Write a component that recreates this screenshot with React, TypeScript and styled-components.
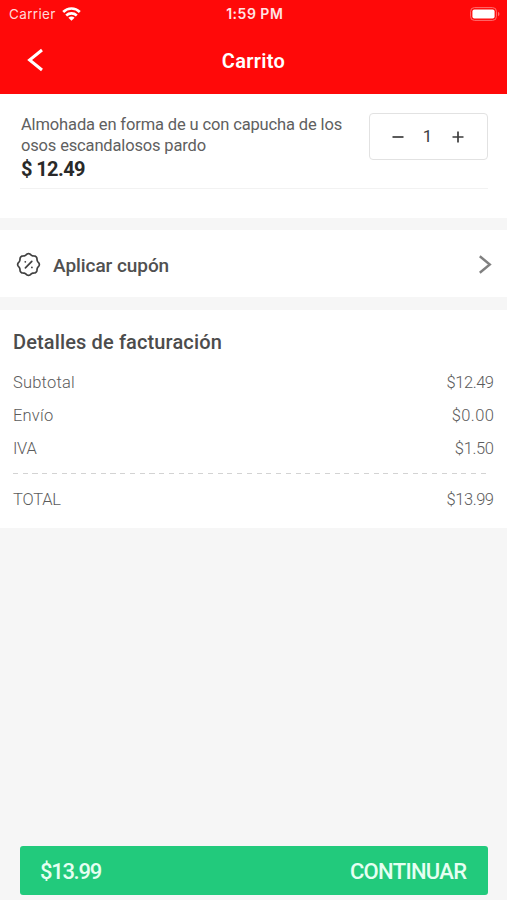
import React from "react";
import styled, { createGlobalStyle } from "styled-components";

const GlobalStyle = createGlobalStyle`
  * { box-sizing: border-box; }
  body { margin: 0; background: #f6f6f6; font-family: Roboto, sans-serif; }
  button { font: inherit; border: 0; padding: 0; margin: 0; background: none; color: inherit; display: flex; }
`;

const Screen = styled.div`
  width: 507px;
  height: 900px;
  display: flex;
  flex-direction: column;
  background: #f6f6f6;
  overflow: hidden;
`;

const Header = styled.header`
  height: 94px;
  flex: none;
  background: #ff0909;
  color: #fff;
`;

const StatusBar = styled.div`
  height: 27px;
  display: grid;
  grid-template-columns: 1fr auto 1fr;
  align-items: center;
  padding: 0 7px 0 9px;
  font-family: Inter, sans-serif;
  font-size: 13.5px;
`;

const Carrier = styled.div`
  display: flex;
  align-items: center;
  gap: 6px;
  color: #ffd9d9;
  letter-spacing: 0.35px;
`;

const Clock = styled.div`
  font-size: 14px;
  font-weight: 600;
  color: #ffe4e4;
  letter-spacing: 0.5px;
  margin-right: -0.5px;
`;

const BatterySlot = styled.div`
  display: flex;
  justify-content: flex-end;
`;

const TitleBar = styled.div`
  height: 67px;
  display: grid;
  grid-template-columns: 50px 1fr 50px;
  align-items: center;
`;

const BackButton = styled.button`
  && {
    padding-left: 26px;
    margin-top: -2px;
  }
`;

const Title = styled.h1`
  margin: 0;
  padding-top: 2px;
  text-align: center;
  font-size: 20px;
  font-weight: 600;
  line-height: 65px;
  letter-spacing: 0.3px;
`;

const CartSection = styled.section`
  height: 124px;
  flex: none;
  padding: 19px 19px 0 20px;
  background: #fff;
`;

const CartItem = styled.div`
  height: 76px;
  display: flex;
  justify-content: space-between;
  border-bottom: 1px solid #f2f2f2;
`;

const ItemText = styled.div`
  padding-left: 1px;
`;

const ItemLine = styled.div<{ $spacing: number }>`
  font-size: 16.5px;
  line-height: 21px;
  padding-top: 1px;
  margin-bottom: -1px;
  color: #606060;
  white-space: nowrap;
  letter-spacing: ${(p) => p.$spacing}px;
`;

const Price = styled.div`
  padding-top: 2px;
  font-size: 20px;
  line-height: 24px;
  font-weight: 700;
  letter-spacing: -0.6px;
  color: #292929;
`;

const Stepper = styled.div`
  width: 119px;
  height: 47px;
  display: flex;
  align-items: center;
  justify-content: center;
  gap: 18px;
  padding-right: 2px;
  border: 1.5px solid #e2e2e2;
  border-radius: 4px;
  color: #3d3d3d;
`;

const Quantity = styled.span`
  width: 12px;
  text-align: center;
  font-size: 17px;
  line-height: 20px;
  padding-bottom: 1px;
`;

const CouponRow = styled.section`
  height: 67px;
  margin: 12px 0 13px;
  flex: none;
  display: flex;
  align-items: center;
  padding: 1px 15px 0 16px;
  background: #fff;
`;

const CouponLabel = styled.span`
  flex: 1;
  margin-left: 12px;
  padding-top: 2px;
  font-size: 19px;
  font-weight: 500;
  letter-spacing: -0.06px;
  color: #505050;
`;

const Billing = styled.section`
  height: 218px;
  flex: none;
  padding: 18px 13px 0;
  background: #fff;
`;

const BillingTitle = styled.h2`
  margin: 0 0 10px;
  font-size: 20px;
  line-height: 28px;
  font-weight: 500;
  letter-spacing: 0.13px;
  color: #4c4c4c;
`;

const BillingRow = styled.div`
  height: 33px;
  display: flex;
  justify-content: space-between;
  align-items: center;
  font-size: 16.5px;
  font-weight: 300;
  color: #5c5c5c;
`;

const Label = styled.span<{ $spacing: number }>`
  letter-spacing: ${(p) => p.$spacing}px;
`;

const Amount = styled.span<{ $spacing: number }>`
  letter-spacing: ${(p) => p.$spacing}px;
  margin-right: ${(p) => -p.$spacing}px;
`;

const Dashes = styled.div`
  height: 1px;
  margin: 8px 6px 9px 0;
  background: repeating-linear-gradient(90deg, #d3d3d3 0 5px, transparent 5px 9.75px);
`;

const Checkout = styled.button`
  && {
    height: 49px;
    margin: auto 19px 5px 20px;
    padding: 2px 21px 0 20px;
    flex: none;
    align-items: center;
    justify-content: space-between;
    border-radius: 3px;
    background: #22ca7c;
    color: #e6fff2;
    font-size: 22px;
    font-weight: 500;
  }
`;

const rows = [
  { label: "Subtotal", amount: "$12.49", labelSpacing: 0.2, amountSpacing: -0.45 },
  { label: "Envío", amount: "$0.00", labelSpacing: 0.2, amountSpacing: 0.45 },
  { label: "IVA", amount: "$1.50", labelSpacing: -0.3, amountSpacing: -0.35 },
];

const WifiIcon = () => (
  <svg width="19" height="14" viewBox="0 0 19 14" fill="none" stroke="#fff" strokeWidth="2.6">
    <path d="M1.2 5C5.8.4 13.2.4 17.8 5" />
    <path d="M4.2 8.5c3-2.8 7.6-2.8 10.6 0" />
    <path d="M9.5 13.8 6.4 10.7c1.7-1.5 4.5-1.5 6.2 0Z" fill="#fff" stroke="none" />
  </svg>
);

const BatteryIcon = () => (
  <svg width="30" height="14" viewBox="0 0 30 14">
    <rect x=".6" y=".6" width="25.8" height="12.8" rx="3.8" fill="none" stroke="#ff7070" />
    <rect x="2.4" y="2.4" width="22.2" height="9.2" rx="2" fill="#fff" />
    <path d="M28 4.8c2 .9 2 3.5 0 4.4Z" fill="#ff7070" />
  </svg>
);

// Eight-lobed outline sampled around the badge centre.
const badgeOutline = Array.from({ length: 96 }, (_, i) => {
  const angle = (i / 96) * Math.PI * 2;
  const radius = 10.2 + 0.65 * Math.cos(angle * 8);
  return `${(12.5 + radius * Math.cos(angle)).toFixed(2)},${(12.5 + radius * Math.sin(angle)).toFixed(2)}`;
}).join(" ");

const CouponIcon = () => (
  <svg width="25" height="25" viewBox="0 0 25 25" fill="none" stroke="#404040" strokeWidth="1.7" strokeLinecap="round" strokeLinejoin="round">
    <polygon points={badgeOutline} />
    <path d="m9.4 15.8 6.4-6.4" />
    <path d="M9.3 9.8h.01M15.9 15.4h.01" strokeWidth="1.8" />
  </svg>
);

export default function App() {
  return (
    <>
      <GlobalStyle />
      <Screen>
        <Header>
          <StatusBar>
            <Carrier>Carrier<WifiIcon /></Carrier>
            <Clock>1:59 PM</Clock>
            <BatterySlot><BatteryIcon /></BatterySlot>
          </StatusBar>
          <TitleBar>
            <BackButton aria-label="Volver">
              <svg width="18" height="24" viewBox="0 0 18 24" fill="none" stroke="#fff" strokeWidth="3">
                <path d="M16 2 3.6 12 16 22" />
              </svg>
            </BackButton>
            <Title>Carrito</Title>
          </TitleBar>
        </Header>

        <CartSection>
          <CartItem>
            <ItemText>
              <ItemLine $spacing={-0.14}>Almohada en forma de u con capucha de los</ItemLine>
              <ItemLine $spacing={-0.16}>osos escandalosos pardo</ItemLine>
              <Price>$ 12.49</Price>
            </ItemText>
            <Stepper>
              <button aria-label="Quitar uno">
                <svg width="12" height="12" stroke="currentColor" strokeWidth="1.7"><path d="M.5 6h11" /></svg>
              </button>
              <Quantity>1</Quantity>
              <button aria-label="Agregar uno">
                <svg width="12" height="12" stroke="currentColor" strokeWidth="1.7"><path d="M.5 6h11M6 .5v11" /></svg>
              </button>
            </Stepper>
          </CartItem>
        </CartSection>

        <CouponRow>
          <CouponIcon />
          <CouponLabel>Aplicar cupón</CouponLabel>
          <svg width="14" height="19" viewBox="0 0 14 19" fill="none" stroke="#808080" strokeWidth="2.4">
            <path d="m1.8 1.3 10 8.2-10 8.2" />
          </svg>
        </CouponRow>

        <Billing>
          <BillingTitle>Detalles de facturación</BillingTitle>
          {rows.map((row) => (
            <BillingRow key={row.label}>
              <Label $spacing={row.labelSpacing}>{row.label}</Label>
              <Amount $spacing={row.amountSpacing}>{row.amount}</Amount>
            </BillingRow>
          ))}
          <Dashes />
          <BillingRow>
            <Label $spacing={-0.2}>TOTAL</Label>
            <Amount $spacing={-0.45}>$13.99</Amount>
          </BillingRow>
        </Billing>

        <Checkout>
          <Label $spacing={-1.3}>$13.99</Label>
          <Amount $spacing={-0.7}>CONTINUAR</Amount>
        </Checkout>
      </Screen>
    </>
  );
}
